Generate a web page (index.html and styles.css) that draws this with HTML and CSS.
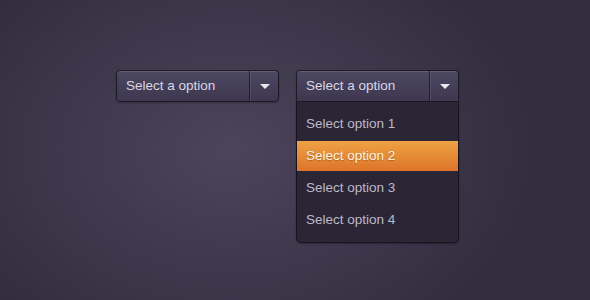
FILE: index.html
```html
<!DOCTYPE html>
<html lang="en">
<head>
  <meta charset="UTF-8" />
  <title>Select dropdowns</title>
  <link rel="stylesheet" href="styles.css">
</head>
<body>
  <div class="stage">
    <div class="select">
      <span class="select-label">Select a option</span>
      <span class="select-arrow"><i class="tri"></i></span>
    </div>

    <div class="select-wrap">
      <div class="select open">
        <span class="select-label">Select a option</span>
        <span class="select-arrow"><i class="tri"></i></span>
      </div>
      <ul class="menu">
        <li>Select option 1</li>
        <li class="active">Select option 2</li>
        <li>Select option 3</li>
        <li>Select option 4</li>
      </ul>
    </div>
  </div>
</body>
</html>
```

FILE: styles.css
```css
html, body {
  height: 100%;
}
body {
  margin: 0;
  font-family: "Liberation Sans", Arial, sans-serif;
  background: radial-gradient(ellipse 300px 220px at 230px 150px, #4b445b 0%, #3d374b 60%, #322d3f 100%);
  background-color: #332f40;
}
.stage {
  display: flex;
  align-items: flex-start;
  gap: 17px;
  padding: 70px 0 0 116px;
}
.select {
  display: flex;
  width: 163px;
  height: 32px;
  box-sizing: border-box;
  border: 1px solid #1d1a26;
  border-radius: 4px;
  background: linear-gradient(#4d4862, #3d384f);
  box-shadow: inset 0 1px 0 rgba(255,255,255,0.12), 0 1px 2px rgba(0,0,0,0.25);
  color: #dad6e4;
  font-size: 13.5px;
}
.select.open {
  border-radius: 4px 4px 0 0;
}
.select-label {
  flex: 1;
  padding-left: 9px;
  line-height: 29px;
  border-right: 1px solid #24202e;
}
.select-arrow {
  width: 27px;
  display: flex;
  align-items: center;
  justify-content: center;
  border-left: 1px solid rgba(255,255,255,0.08);
}
.tri {
  width: 0;
  height: 0;
  border-left: 5px solid transparent;
  border-right: 5px solid transparent;
  border-top: 5px solid #e8e6ee;
}
.select-wrap {
  display: flex;
  flex-direction: column;
}
.menu {
  list-style: none;
  margin: 0;
  padding: 6px 0 6px;
  width: 163px;
  box-sizing: border-box;
  border: 1px solid #17141f;
  border-top: none;
  border-radius: 0 0 5px 5px;
  background: #2a2636;
  box-shadow: 0 1px 2px rgba(0,0,0,0.3);
}
.menu li {
  height: 32px;
  line-height: 32px;
  padding-left: 9px;
  color: #bdb8c8;
  font-size: 13.5px;
}
.menu li.active {
  height: 30px;
  line-height: 30px;
  margin: 1px 0;
  background: linear-gradient(#efa243, #de742a);
  color: #fff6ea;
  text-shadow: 0 1px 1px rgba(120,50,0,0.4);
}
```
